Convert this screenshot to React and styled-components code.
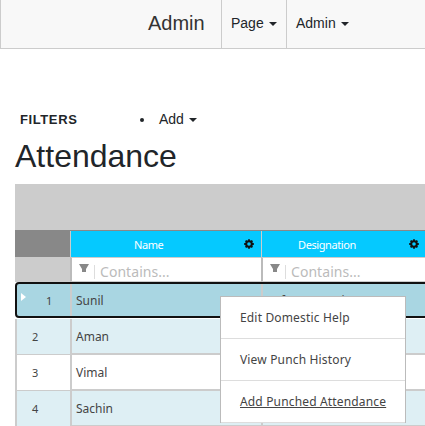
import React from "react";
import styled, { createGlobalStyle } from "styled-components";

const Global = createGlobalStyle`
  * { box-sizing: border-box; }
  html, body { margin: 0; background: #fff; overflow: hidden; }
  body { font-family: "Liberation Sans", Arial, sans-serif; color: #212529; font-size: 14px; }
`;

const Page = styled.div`
  position: relative;
  width: 425px;
  height: 426px;
  overflow: hidden;
`;

const NavBar = styled.nav`
  display: flex;
  height: 49px;
  background: #f8f8f8;
  border-left: 1px solid #ccc;
  border-bottom: 1px solid #ccc;
`;

const Brand = styled.div`
  width: 220px;
  padding: 11px 0 0 147px;
  font-size: 20px;
  line-height: 24px;
  color: #333;
`;

const NavItem = styled.div`
  display: flex;
  align-items: center;
  width: ${(p) => p.$width};
  padding: 0 0 2px 9px;
  border-left: 1px solid #ccc;
`;

const Caret = styled.span`
  margin-left: 5px;
  margin-top: 2px;
  border-top: 4px solid currentColor;
  border-left: 4px solid transparent;
  border-right: 4px solid transparent;
`;

const Actions = styled.div`
  display: flex;
  align-items: center;
  height: 20px;
  margin-top: 60px;
  padding-left: 20px;
`;

const Filters = styled.strong`
  width: 120px;
  font-size: 13px;
  letter-spacing: 0.6px;
`;

const Bullet = styled.span`
  width: 4px;
  height: 4px;
  margin: 2px 15px 0 0;
  border-radius: 50%;
  background: #212529;
`;

const Title = styled.h1`
  margin: 8px 0 8px 15px;
  font-size: 32px;
  font-weight: 400;
  line-height: 38px;
  height: 39px;
`;

const Grid = styled.section`
  width: 430px;
  margin-left: 15px;
  font-family: "Noto Sans", "Open Sans", sans-serif;
  font-size: 12px;
  color: #444;
`;

const GroupPanel = styled.div`
  height: 47px;
  background: #ccc;
  border-bottom: 1px solid #888;
`;

const Row = styled.div`
  display: grid;
  grid-template-columns: 55px 191px 184px;
  height: ${(p) => p.$height};
`;

const HeadCell = styled.div`
  display: flex;
  align-items: center;
  background: ${(p) => (p.$corner ? "#888" : "#05c9ff")};
  border-left: ${(p) => (p.$corner ? "none" : "1px solid #ccc")};
  color: #fff;
  font-size: 11px;
  padding-left: ${(p) => p.$indent || "0"};
`;

const HeadLabel = styled.span`
  width: ${(p) => p.$width};
  letter-spacing: -0.4px;
  white-space: nowrap;
`;

const GearIcon = styled.svg`
  width: 10px;
  height: 10px;
  margin-bottom: 1px;
`;

const FilterCell = styled.div`
  display: flex;
  align-items: center;
  border-top: 1px solid #ccc;
  border-left: 2px solid ${(p) => (p.$corner ? "#ccc" : "#bbb")};
  border-bottom: 1px solid #ccc;
  background: ${(p) => (p.$corner ? "#ccc" : "#fff")};
  padding-left: 7px;
  color: #bbb;
  font-size: 14px;
`;

const Funnel = styled.svg`
  width: 10px;
  height: 9px;
  margin: 0 5px 3px 0;
`;

const Cursor = styled.span`
  width: 1px;
  height: 14px;
  margin: 5px 5px 0 0;
  background: #ddd;
`;

const Placeholder = styled.span`
  padding-top: 3px;
  letter-spacing: 0.05px;
`;

const SelectedRow = styled(Row)`
  grid-template-columns: 53px 191px 184px;
  background: #a9d6e2;
  border: 2px solid #111;
  border-radius: 4px;
  margin-bottom: 1px;
`;

const NumberCell = styled.div`
  display: flex;
  align-items: center;
  padding-left: ${(p) => (p.$selected ? "4px" : "15px")};
  font-size: 11px;
  border-left: ${(p) => (p.$selected ? "none" : "2px solid #ccc")};
  border-bottom: ${(p) => (p.$selected ? "none" : "1px solid #ccc")};
`;

const Pointer = styled.span`
  margin: 0 20px 6px 0;
  border-left: 5px solid #fff;
  border-top: 4px solid transparent;
  border-bottom: 4px solid transparent;
`;

const Cell = styled.div`
  display: flex;
  align-items: center;
  padding: 1px 0 0 4px;
  border-left: 2px solid #ccc;
  border-bottom: ${(p) => (p.$plain ? "none" : "2px solid #ccc")};
`;

const DataRow = styled(Row)`
  background: ${(p) => (p.$tint ? "#deeff4" : "#fff")};
`;

const Menu = styled.div`
  position: absolute;
  left: 220px;
  top: 296px;
  width: 186px;
  background: #fff;
  border: 1px solid #bbb;
  border-bottom: none;
  font-family: "Noto Sans", "Open Sans", sans-serif;
  font-size: 12px;
  color: #444;
`;

const MenuItem = styled.div`
  height: 42px;
  padding-left: 19px;
  line-height: 41px;
  border-bottom: 1px solid #ddd;
  letter-spacing: 0.16px;
  text-decoration: ${(p) => (p.$active ? "underline" : "none")};
`;

function Gear() {
  return (
    <GearIcon viewBox="0 0 10 10">
      <circle cx="5" cy="5" r="2.8" fill="none" stroke="#111" strokeWidth="2" />
      <path d="M5 .2v2M5 7.8v2M.2 5h2M7.8 5h2M1.6 1.6L3 3M7 7l1.4 1.4M1.6 8.4L3 7M7 3l1.4-1.4" stroke="#111" strokeWidth="1.8" />
    </GearIcon>
  );
}

function FilterField() {
  return (
    <FilterCell>
      <Funnel viewBox="0 0 10 9">
        <path d="M0 0h10L7 5v3H3V5z" fill="#888" />
      </Funnel>
      <Cursor />
      <Placeholder>Contains...</Placeholder>
    </FilterCell>
  );
}

const people = [
  { id: 2, name: "Aman" },
  { id: 3, name: "Vimal" },
  { id: 4, name: "Sachin" },
];

export default function App() {
  return (
    <Page>
      <Global />
      <NavBar>
        <Brand>Admin</Brand>
        <NavItem $width="65px">Page<Caret /></NavItem>
        <NavItem $width="139px">Admin<Caret /></NavItem>
      </NavBar>
      <Actions>
        <Filters>FILTERS</Filters>
        <Bullet />
        Add<Caret />
      </Actions>
      <Title>Attendance</Title>
      <Grid>
        <GroupPanel />
        <Row $height="26px">
          <HeadCell $corner />
          <HeadCell $indent="63px"><HeadLabel $width="110px">Name</HeadLabel><Gear /></HeadCell>
          <HeadCell $indent="36px"><HeadLabel $width="111px">Designation</HeadLabel><Gear /></HeadCell>
        </Row>
        <Row $height="25px">
          <FilterCell $corner />
          <FilterField />
          <FilterField />
        </Row>
        <SelectedRow $height="36px">
          <NumberCell $selected><Pointer />1</NumberCell>
          <Cell $plain>Sunil</Cell>
          <Cell $plain>Software Engineer</Cell>
        </SelectedRow>
        {people.map((person, i) => (
          <DataRow key={person.id} $height="36px" $tint={i % 2 === 0}>
            <NumberCell>{person.id}</NumberCell>
            <Cell>{person.name}</Cell>
            <Cell />
          </DataRow>
        ))}
      </Grid>
      <Menu>
        <MenuItem>Edit Domestic Help</MenuItem>
        <MenuItem>View Punch History</MenuItem>
        <MenuItem $active>Add Punched Attendance</MenuItem>
      </Menu>
    </Page>
  );
}
